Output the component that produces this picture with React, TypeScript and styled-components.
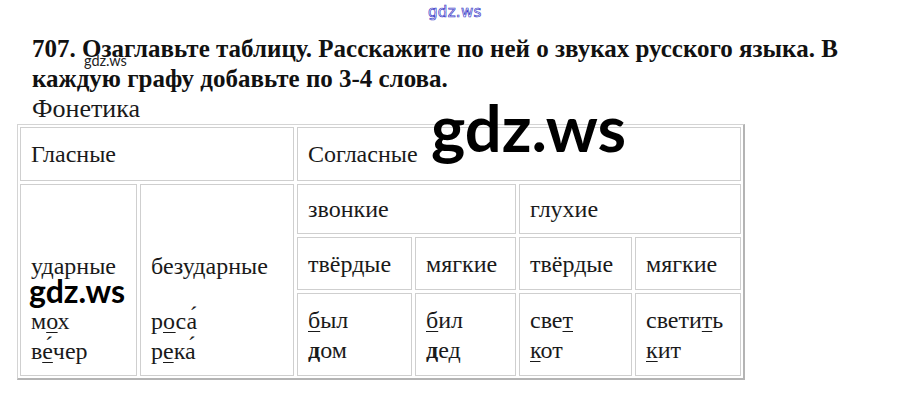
import React from "react";
import styled, { createGlobalStyle } from "styled-components";

const Global = createGlobalStyle`
  html, body { margin: 0; padding: 0; background: #fff; }
`;

const Page = styled.div`
  position: relative;
  width: 911px;
  height: 397px;
  padding: 34px 0 0 17px;
  box-sizing: border-box;
  overflow: hidden;
  background: #fff;
  font-family: "Liberation Serif", "Noto Serif", "DejaVu Serif", serif;
  color: #111;
`;

const Title = styled.div`
  margin: 0 0 0 15px;
  font-family: "Liberation Serif", "Noto Serif", "DejaVu Serif", serif;
  font-size: 25px;
  line-height: 30px;
  font-weight: 700;
  white-space: nowrap;
  color: #111;
`;

const Subtitle = styled.div`
  margin-left: 15px;
  font-family: "Liberation Serif", "Noto Serif", "DejaVu Serif", serif;
  font-size: 26px;
  line-height: 30px;
  color: #1a1a1a;
`;

const Table = styled.div`
  display: grid;
  width: max-content;
  grid-template-columns: 117px 154px 115px 101px 113px 106px;
  grid-template-rows: 54px 50px 53px 83px;
  gap: 3px;
  padding: 2px;
  border-top: 1px solid #d4d4d4;
  border-left: 1px solid #d4d4d4;
  border-right: 2px solid #b4b4b4;
  border-bottom: 2px solid #b4b4b4;
`;

const Cell = styled.div<{ $col: string; $row: string; $end?: boolean }>`
  grid-column: ${(p) => p.$col};
  grid-row: ${(p) => p.$row};
  border: 1px solid #cfcfcf;
  padding: 0 10px ${(p) => (p.$end ? "9px" : "0")} 10px;
  display: flex;
  flex-direction: column;
  justify-content: ${(p) => (p.$end ? "flex-end" : "center")};
  font-family: "Liberation Serif", "Noto Serif", "DejaVu Serif", serif;
  font-size: 24px;
  line-height: 30px;
  white-space: nowrap;
  color: #1a1a1a;
`;

const Label = styled.div<{ $gap: number }>`
  margin-bottom: ${(p) => p.$gap}px;
`;

const U = styled.span<{ $bold?: boolean }>`
  text-decoration: underline;
  text-underline-offset: 3px;
  text-decoration-thickness: ${(p) => (p.$bold ? "3px" : "1px")};
  font-weight: ${(p) => (p.$bold ? 700 : 400)};
`;

const Stress = styled.span`
  position: relative;
  &::after {
    content: "´";
    position: absolute;
    left: 0.12em;
    top: -0.22em;
    font-size: 1em;
    line-height: 1;
  }
`;

const B = styled.span`
  font-weight: 700;
`;

const MarkTop = styled.div`
  position: absolute;
  left: 428px;
  top: 3px;
  font-family: "DejaVu Sans", sans-serif;
  font-size: 15px;
  color: #fff;
  -webkit-text-stroke: 0.7px #3838c8;
  letter-spacing: 0.3px;
`;

const Mark = styled.div<{ $x: number; $y: number; $size: number; $weight: number; $color: string }>`
  position: absolute;
  left: ${(p) => p.$x}px;
  top: ${(p) => p.$y}px;
  font-family: Lato, sans-serif;
  font-size: ${(p) => p.$size}px;
  font-weight: ${(p) => p.$weight};
  color: ${(p) => p.$color};
  line-height: 1;
`;

export default function App() {
  return (
    <>
      <Global />
      <Page>
        <Title>
          707. Озаглавьте таблицу. Расскажите по ней о звуках русского языка. В
          <br />
          каждую графу добавьте по 3-4 слова.
        </Title>
        <Subtitle>Фонетика</Subtitle>
        <Table>
          <Cell $col="1 / 3" $row="1">Гласные</Cell>
          <Cell $col="3 / 7" $row="1">Согласные</Cell>
          <Cell $col="1" $row="2 / 5" $end>
            <Label $gap={25}>ударные</Label>
            <div>м<U>о</U>х</div>
            <div>в<U><Stress>е</Stress></U>чер</div>
          </Cell>
          <Cell $col="2" $row="2 / 5" $end>
            <Label $gap={25}>безударные</Label>
            <div>р<U>о</U>с<Stress>а</Stress></div>
            <div>р<U>е</U>к<Stress>а</Stress></div>
          </Cell>
          <Cell $col="3 / 5" $row="2">звонкие</Cell>
          <Cell $col="5 / 7" $row="2">глухие</Cell>
          <Cell $col="3" $row="3">твёрдые</Cell>
          <Cell $col="4" $row="3">мягкие</Cell>
          <Cell $col="5" $row="3">твёрдые</Cell>
          <Cell $col="6" $row="3">мягкие</Cell>
          <Cell $col="3" $row="4">
            <div><U>б</U>ыл</div>
            <div><U $bold>д</U>ом</div>
          </Cell>
          <Cell $col="4" $row="4">
            <div><U>б</U>ил</div>
            <div><B>д</B>ед</div>
          </Cell>
          <Cell $col="5" $row="4">
            <div>све<U>т</U></div>
            <div><U>к</U>от</div>
          </Cell>
          <Cell $col="6" $row="4">
            <div>свети<U>т</U>ь</div>
            <div><U>к</U>ит</div>
          </Cell>
        </Table>
        <MarkTop>gdz.ws</MarkTop>
        <Mark $x={84} $y={54} $size={14.5} $weight={400} $color="#222">gdz.ws</Mark>
        <Mark $x={431} $y={95} $size={65} $weight={700} $color="#000">gdz.ws</Mark>
        <Mark $x={29} $y={275} $size={32} $weight={700} $color="#000">gdz.ws</Mark>
      </Page>
    </>
  );
}
